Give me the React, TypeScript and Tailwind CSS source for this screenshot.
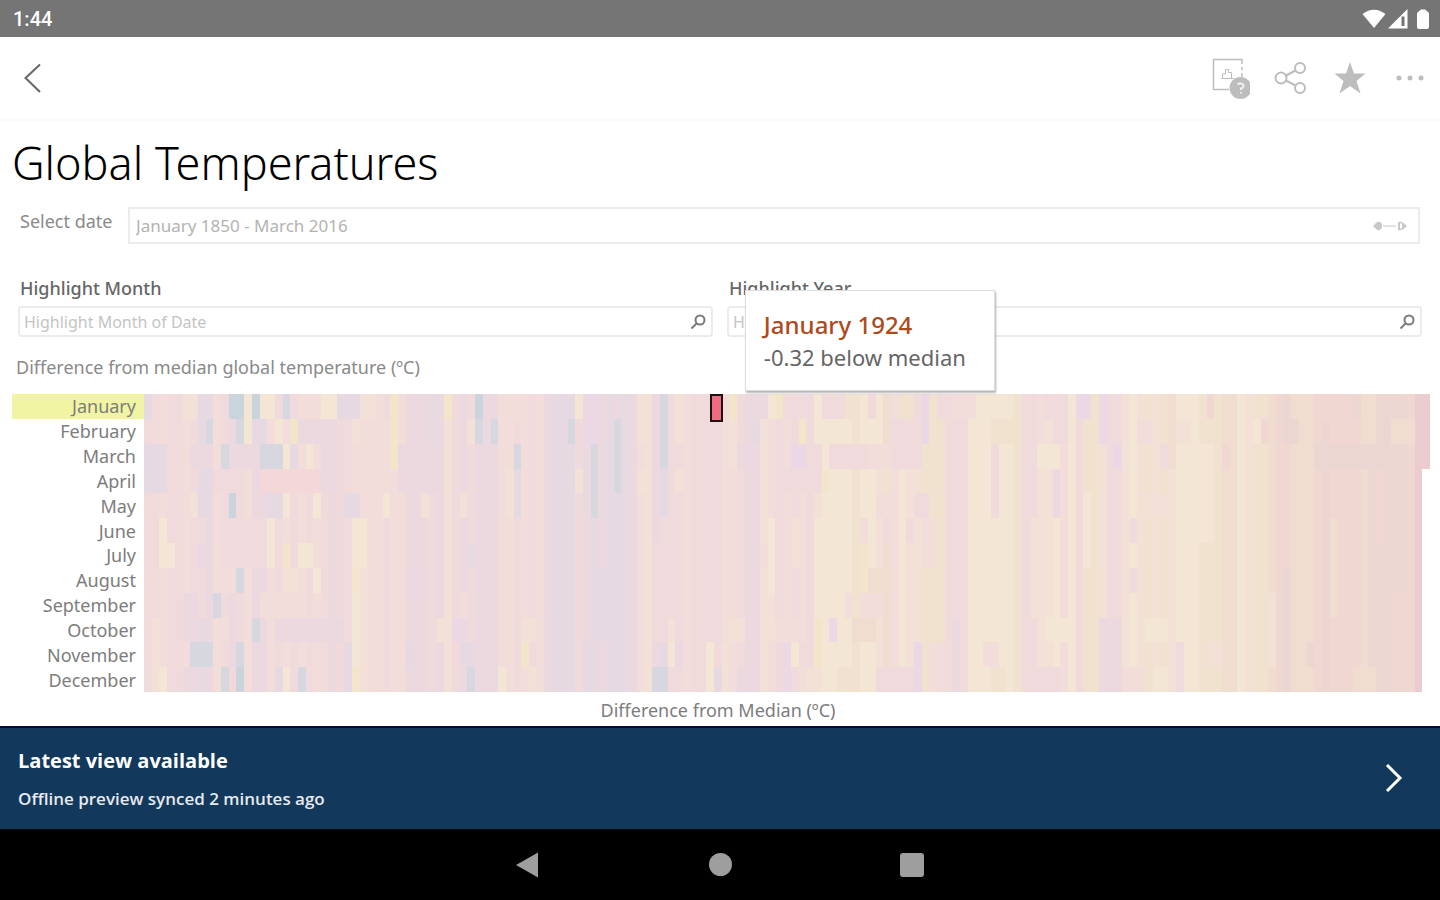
type Tone = keyof typeof TONES

// Faded palette of the heat map, cold to warm
const TONES = {
  t: '#c9d4dc',
  b: '#d7d7df',
  l: '#e6d9e2',
  p: '#ecd9e0',
  v: '#ecd7e4',
  r: '#f1dadc',
  q: '#f4d8d9',
  k: '#f2dddb',
  h: '#f3e0d7',
  y: '#f3e6d4',
  g: '#f2e5ca',
  o: '#f1e1cf',
  a: '#f1dcd0',
  s: '#f0d7d2',
  m: '#ecd6d1',
  e: '#ebcdd1'
}

const MONTHS = [
  'January',
  'February',
  'March',
  'April',
  'May',
  'June',
  'July',
  'August',
  'September',
  'October',
  'November',
  'December'
]

const FIRST_YEAR = 1850
const YEARS = 167
const SELECTED_YEAR = 1924

// Prevailing tone of each year, ten years a row
const YEAR_TONES = (
  'rrkrrkrlpk' +
  'rprkppkrkr' +
  'krkrprryhk' +
  'krkkppprph' +
  'rprpppkkrk' +
  'rkplllrplp' +
  'lllpkhplrr' +
  'krrrrkkrpp' +
  'hkrkrkryyy' +
  'yyoyyhakyh' +
  'hooorrryyy' +
  'yyyorrhhyk' +
  'yroohrrhyh' +
  'ohohyyyooo' +
  'aayhooasma' +
  'aasmssssam' +
  'mmmmse'
).split('') as Tone[]

// Runs of cells that stand out: year, month, years, months, tone
const PATCHES: [number, number, number, number, Tone][] = [
  [0, 0, 1, 1, 'l'], [5, 0, 2, 1, 'h'], [7, 0, 2, 1, 'l'], [11, 0, 2, 1, 't'], [12, 1, 1, 1, 'b'],
  [13, 0, 1, 2, 'y'], [14, 0, 1, 1, 't'], [15, 0, 2, 1, 'y'], [18, 0, 1, 1, 'b'], [20, 0, 2, 1, 'k'],
  [23, 0, 2, 1, 'y'], [25, 0, 3, 1, 'l'], [28, 0, 2, 1, 'h'], [32, 0, 1, 3, 'g'], [37, 0, 1, 2, 'l'],
  [39, 0, 1, 1, 'g'], [39, 1, 1, 4, 'h'], [43, 0, 1, 1, 't'], [43, 1, 1, 1, 'b'], [47, 0, 3, 1, 'k'],
  [53, 0, 2, 1, 'l'], [55, 1, 1, 1, 'b'], [56, 0, 1, 1, 'y'], [8, 1, 1, 1, 'b'], [9, 1, 1, 1, 'k'],
  [14, 1, 2, 1, 'l'], [17, 1, 1, 1, 'y'], [19, 1, 1, 1, 'g'], [20, 1, 5, 1, 'p'], [27, 1, 1, 1, 'h'],
  [26, 1, 1, 2, 'r'], [28, 1, 4, 2, 'k'], [42, 1, 1, 1, 'h'], [45, 1, 1, 1, 'b'], [0, 2, 3, 2, 'l'],
  [6, 2, 3, 1, 'p'], [10, 2, 1, 1, 'b'], [11, 2, 3, 1, 'p'], [15, 2, 3, 1, 'b'], [18, 2, 1, 1, 'y'],
  [19, 2, 1, 1, 'l'], [21, 2, 1, 1, 'y'], [23, 2, 2, 2, 'p'], [27, 2, 1, 2, 'k'], [33, 2, 5, 2, 'p'],
  [48, 2, 1, 1, 'b'], [48, 3, 1, 2, 'l'], [54, 2, 1, 4, 'l'], [7, 3, 2, 2, 'l'], [9, 3, 4, 1, 'r'],
  [15, 3, 8, 1, 'q'], [28, 3, 4, 1, 'k'], [27, 3, 1, 1, 'k'], [47, 3, 1, 2, 'h'], [56, 3, 1, 1, 'h'],
  [6, 4, 1, 1, 'h'], [11, 4, 1, 1, 't'], [16, 4, 2, 1, 'l'], [18, 4, 1, 1, 'y'], [22, 4, 1, 1, 'y'],
  [26, 4, 2, 1, 'l'], [28, 4, 1, 1, 'k'], [31, 4, 1, 1, 'y'], [36, 4, 1, 1, 'h'], [41, 4, 1, 1, 'h'],
  [8, 5, 1, 1, 'l'], [2, 5, 1, 1, 'y'], [2, 6, 2, 1, 'y'], [7, 5, 1, 4, 'r'], [7, 6, 1, 1, 'v'],
  [16, 5, 1, 2, 'y'], [11, 5, 5, 2, 'r'], [18, 6, 1, 1, 'g'], [20, 6, 2, 1, 'y'], [27, 5, 2, 2, 'y'],
  [27, 7, 1, 1, 'g'], [42, 6, 1, 1, 'l'], [12, 7, 1, 1, 'b'], [9, 7, 3, 1, 'k'], [18, 7, 2, 1, 'h'],
  [22, 7, 1, 1, 'y'], [35, 7, 1, 1, 'v'], [46, 5, 2, 4, 'k'], [9, 8, 1, 1, 'b'], [5, 8, 2, 2, 'p'],
  [15, 8, 6, 1, 'k'], [41, 8, 1, 1, 'k'], [14, 9, 1, 1, 'b'], [10, 9, 1, 1, 'k'], [1, 9, 1, 3, 'h'],
  [17, 9, 9, 1, 'p'], [40, 9, 1, 1, 'v'], [38, 9, 1, 1, 'h'], [49, 9, 2, 1, 'h'], [53, 9, 1, 3, 'l'],
  [6, 10, 3, 1, 'b'], [12, 10, 1, 1, 'b'], [20, 10, 1, 1, 'k'], [34, 10, 1, 1, 'l'], [41, 10, 2, 1, 'l'],
  [49, 10, 1, 1, 'g'], [2, 11, 1, 1, 'y'], [5, 11, 2, 1, 'p'], [10, 11, 1, 1, 'b'], [12, 11, 1, 1, 't'],
  [11, 11, 1, 1, 'q'], [17, 11, 1, 1, 'l'], [18, 11, 1, 1, 'y'], [20, 11, 1, 1, 'b'], [26, 10, 1, 2, 'l'],
  [42, 11, 1, 1, 'b'], [46, 11, 1, 1, 'y'], [50, 11, 1, 1, 'h'], [27, 11, 1, 1, 'g'],

  [57, 0, 2, 2, 'v'], [61, 0, 1, 1, 'p'], [64, 0, 2, 2, 'h'], [67, 0, 1, 3, 'b'], [69, 0, 1, 2, 'h'],
  [76, 0, 1, 1, 'g'], [79, 0, 2, 1, 'p'], [81, 0, 1, 1, 'y'], [82, 0, 1, 1, 'g'], [83, 0, 4, 1, 'r'],
  [88, 0, 3, 1, 'r'], [91, 0, 2, 1, 'o'], [94, 0, 1, 1, 'r'], [95, 0, 1, 2, 'y'], [98, 0, 2, 1, 'o'],
  [100, 0, 1, 3, 'r'], [101, 0, 1, 2, 'v'], [103, 0, 1, 1, 'r'], [105, 0, 3, 1, 'k'], [109, 0, 4, 1, 'y'],
  [76, 1, 1, 2, 'h'], [79, 1, 1, 1, 'l'], [85, 1, 1, 1, 'g'], [86, 1, 1, 1, 'r'], [97, 1, 4, 2, 'r'],
  [110, 1, 4, 1, 'o'], [58, 2, 1, 3, 'b'], [61, 1, 1, 3, 'b'], [77, 2, 3, 1, 'p'], [84, 2, 2, 1, 'v'],
  [87, 2, 7, 1, 'r'], [88, 2, 1, 1, 'y'], [94, 2, 3, 1, 'k'], [64, 3, 1, 1, 'h'], [69, 3, 1, 1, 'h'],
  [82, 3, 5, 1, 'r'], [87, 3, 1, 1, 'r'], [88, 3, 1, 1, 'g'], [67, 4, 1, 1, 'l'], [67, 5, 1, 5, 'r'],
  [66, 6, 1, 4, 'r'], [87, 4, 1, 1, 'h'], [96, 3, 1, 1, 'o'], [95, 4, 3, 1, 'k'], [100, 4, 2, 1, 'r'],
  [110, 2, 1, 3, 'r'], [81, 5, 1, 3, 'y'], [80, 6, 1, 1, 'k'], [84, 5, 1, 2, 'h'], [93, 5, 1, 1, 'k'],
  [96, 5, 1, 1, 'r'], [99, 5, 1, 1, 'r'], [99, 6, 1, 1, 'h'], [101, 5, 2, 2, 'k'], [93, 6, 1, 3, 'g'],
  [94, 7, 3, 1, 'a'], [65, 6, 1, 3, 'h'], [61, 6, 2, 5, 'l'], [58, 7, 2, 3, 'l'], [80, 8, 2, 2, 'h'],
  [91, 8, 1, 1, 'k'], [68, 9, 1, 2, 'h'], [76, 9, 2, 1, 'h'], [89, 9, 1, 1, 'v'], [87, 9, 1, 2, 'g'],
  [93, 8, 3, 1, 'k'], [92, 9, 3, 1, 'a'], [82, 9, 4, 1, 'k'], [57, 10, 2, 2, 'l'], [60, 10, 1, 2, 'l'],
  [66, 11, 2, 1, 'b'], [68, 10, 1, 1, 'y'], [69, 10, 1, 1, 'v'], [73, 10, 1, 2, 'y'], [74, 11, 1, 1, 'l'],
  [75, 10, 1, 2, 'h'], [77, 11, 3, 1, 'p'], [83, 10, 1, 1, 'v'], [84, 10, 1, 1, 'y'], [85, 10, 2, 1, 'r'],
  [83, 11, 1, 1, 'v'], [90, 11, 3, 1, 'o'], [86, 11, 2, 1, 'h'], [95, 11, 5, 1, 'r'], [100, 10, 1, 2, 'v'],
  [102, 10, 2, 2, 'k'], [105, 9, 1, 3, 'p'], [109, 10, 2, 1, 'k'], [110, 11, 2, 1, 'o'],

  [116, 0, 1, 2, 'k'], [117, 0, 3, 1, 'r'], [118, 1, 2, 1, 'r'], [121, 0, 2, 1, 'v'], [124, 0, 1, 2, 'v'],
  [126, 2, 1, 1, 'v'], [116, 2, 3, 1, 'y'], [114, 4, 1, 5, 'r'], [118, 3, 1, 2, 'p'], [115, 5, 3, 4, 'h'],
  [122, 4, 1, 3, 'y'], [128, 5, 1, 1, 'r'], [128, 7, 1, 1, 'r'], [130, 4, 3, 1, 'h'], [132, 2, 1, 1, 'r'],
  [129, 1, 2, 1, 'k'], [133, 0, 1, 3, 'a'], [138, 0, 1, 1, 's'], [137, 2, 2, 4, 'y'], [134, 1, 2, 1, 'h'],
  [145, 1, 1, 1, 's'], [144, 1, 1, 1, 'y'], [140, 2, 1, 1, 's'], [140, 3, 2, 3, 'a'], [142, 6, 1, 3, 'y'],
  [148, 1, 2, 1, 'm'], [148, 2, 1, 5, 's'], [152, 0, 4, 1, 's'], [157, 0, 1, 1, 'm'], [158, 0, 2, 2, 'a'],
  [161, 0, 1, 2, 'm'], [162, 1, 3, 1, 'a'], [152, 2, 7, 1, 'm'], [160, 3, 1, 3, 's'], [154, 5, 1, 4, 'a'],
  [146, 8, 1, 3, 'h'], [155, 8, 3, 3, 's'], [162, 8, 3, 4, 's'], [124, 9, 3, 3, 'p'], [117, 9, 3, 1, 'y'],
  [130, 9, 3, 1, 'y'], [134, 10, 1, 2, 'r'], [138, 10, 2, 1, 'h'], [116, 11, 3, 1, 'r'], [127, 11, 3, 1, 'k'],
  [131, 11, 2, 1, 'y'], [157, 11, 3, 1, 'a'], [151, 10, 1, 1, 'm'], [147, 8, 1, 2, 's'], [165, 10, 1, 2, 'e'],
  [166, 0, 1, 3, 'e']
]

function StatusBar() {
  return (
    <div className="flex h-[37px] items-center justify-between bg-[#757575] pr-2 pl-[13px] text-white">
      <span className="font-[Roboto] text-xl leading-6 font-medium">1:44</span>
      <div className="flex items-center gap-0.5">
        <svg width="24" height="20" viewBox="0 0 24 20" fill="currentColor">
          <path d="M0.500 5Q12 -3.500 23.500 5L12 19Z" />
        </svg>
        <svg width="20" height="20" viewBox="0 0 20 20" fill="currentColor">
          <path fillRule="evenodd" d="M0 19.500L19.500 0V19.500ZM13.500 7.500V17H16.500V7.500Z" />
        </svg>
        <svg width="22" height="20" viewBox="0 0 22 20" fill="currentColor">
          <path d="M8 3L11 0.500H15L18 3Q19 3.500 19 5V18Q19 20 17 20H9Q7 20 7 18V5Q7 3.500 8 3Z" />
        </svg>
      </div>
    </div>
  )
}

function Toolbar() {
  return (
    <header className="flex h-[84px] items-center justify-between border-b-2 border-[#fafafa] pr-2.5 pl-3">
      <button aria-label="Back" className="flex size-10 items-center justify-center text-[#666666]">
        <svg width="20" height="32" viewBox="0 0 20 32" fill="none" stroke="currentColor" strokeWidth="2">
          <path d="M18 2.500L3.500 16L18 30" />
        </svg>
      </button>
      <div className="flex items-center gap-5 text-[#bdbdbd]">
        <button aria-label="Data quality" className="flex size-10 items-center justify-center">
          <svg width="40" height="42" viewBox="0 0 40 42" fill="none" stroke="currentColor">
            <path d="M19 32.500H3.500V2.500H32V7M32 10V13M32 16V20" strokeWidth="1.500" />
            <path d="M12.500 21V17H15.500V12.500H18.500V15.500H21.500V21M11.500 21.500H24" strokeWidth="1" />
            <circle cx="30.500" cy="31" r="11" fill="currentColor" stroke="none" />
            <path d="M27.500 27.500Q31 25 33.500 28Q34 30.500 31 31.500V33M31 35V36.500" stroke="#eeeeee" strokeWidth="2" />
          </svg>
        </button>
        <button aria-label="Share" className="flex size-10 items-center justify-center">
          <svg width="34" height="34" viewBox="0 0 34 34" fill="none" stroke="currentColor" strokeWidth="2">
            <circle cx="8" cy="17" r="5.500" />
            <circle cx="27" cy="7" r="5" />
            <circle cx="27" cy="27" r="5" />
            <path d="M13 14.500L22.500 9.500M13 19.500L22.500 24.500" />
          </svg>
        </button>
        <button aria-label="Favorite" className="flex size-10 items-center justify-center">
          <svg width="32" height="32" viewBox="0 0 32 32" fill="currentColor">
            <path d="M16 0L20 11.500H31.500L22.500 19L26.500 31.500L16 24L5.500 31.500L9.500 19L0.500 11.500H12Z" />
          </svg>
        </button>
        <button aria-label="More" className="flex size-10 items-center justify-center">
          <svg width="28" height="6" viewBox="0 0 28 6" fill="currentColor">
            <circle cx="3" cy="3" r="2.500" />
            <circle cx="14" cy="3" r="2.500" />
            <circle cx="25" cy="3" r="2.500" />
          </svg>
        </button>
      </div>
    </header>
  )
}

function HighlightField({ id, label, placeholder }: { id: string; label: string; placeholder: string }) {
  return (
    <div className="min-w-0 flex-1">
      <label htmlFor={id} className="block px-0.5 text-lg leading-6 font-medium text-[#666666]">
        {label}
      </label>
      <div className="mt-1.5 flex h-[31px] items-center rounded-sm border-2 border-[#ebebeb] pr-1 pl-1">
        <input
          id={id}
          placeholder={placeholder}
          className="min-w-0 flex-1 text-base leading-6 text-[#666666] outline-none placeholder:text-[#c4c4c4]"
        />
        <svg width="18" height="18" viewBox="0 0 18 18" fill="none" stroke="#7a7a7a" strokeWidth="2">
          <circle cx="11" cy="7" r="4.500" />
          <path d="M7.500 10.500L2.500 15.500" />
        </svg>
      </div>
    </div>
  )
}

function HeatMap() {
  const selectedLeft = `${((SELECTED_YEAR - FIRST_YEAR) / YEARS) * 100}%`

  return (
    <div className="mt-[13px] flex h-[298px] pr-2.5 pl-3">
      <div className="grid w-[132px] grid-rows-12 text-lg text-[#7d7d7d]">
        {MONTHS.map((month, i) => (
          <div
            key={month}
            className={`flex items-center justify-end pr-2 leading-6 ${i === 0 ? 'bg-[#f1f4a3]' : ''}`}
          >
            {month}
          </div>
        ))}
      </div>
      <div className="relative flex-1">
        <svg
          className="block h-full w-full"
          viewBox={`0 0 ${YEARS} ${MONTHS.length}`}
          preserveAspectRatio="none"
          shapeRendering="crispEdges"
        >
          {YEAR_TONES.map((tone, i) => (
            <rect key={i} x={i} y={0} width={1} height={i === YEARS - 1 ? 3 : 12} fill={TONES[tone]} />
          ))}
          {PATCHES.map(([year, month, years, months, tone], i) => (
            <rect key={i} x={year} y={month} width={years} height={months} fill={TONES[tone]} />
          ))}
        </svg>
        <div
          className="absolute top-0 -ml-1 h-7 w-[13px] border-2 border-[#1c1014] bg-[#ee6b80]"
          style={{ left: selectedLeft }}
        />
        <div
          className="absolute bottom-full mb-[3px] ml-[31px] h-[101px] w-[250px] border border-[#dddddd] bg-white px-[18px] pt-[18px] shadow-[1px_2px_2px_#b5b5b5]"
          style={{ left: selectedLeft }}
        >
          <div className="text-2xl leading-8 font-medium whitespace-nowrap text-[#b04a1c]">January 1924</div>
          <div className="text-[22px] leading-8 whitespace-nowrap text-[#666666]">-0.32 below median</div>
        </div>
      </div>
    </div>
  )
}

function NavigationBar() {
  return (
    <nav className="flex h-[71px] items-center justify-center gap-[152px] bg-black text-[#9e9e9e]">
      <button aria-label="Back" className="flex size-10 items-center justify-center">
        <svg width="24" height="26" viewBox="0 0 24 26" fill="currentColor">
          <path d="M0 13L22 0.500V25.500Z" />
        </svg>
      </button>
      <button aria-label="Home" className="flex size-10 items-center justify-center">
        <span className="size-[23px] rounded-full bg-current" />
      </button>
      <button aria-label="Recent apps" className="flex size-10 items-center justify-center">
        <span className="size-6 rounded-[3px] bg-current" />
      </button>
    </nav>
  )
}

export default function App() {
  return (
    <div className="flex min-h-screen flex-col bg-white font-['Noto_Sans',sans-serif]">
      <StatusBar />
      <Toolbar />

      <main className="flex-1">
        <h1 className="px-3 pt-3 text-[45px] leading-[60px] font-light text-black">Global Temperatures</h1>

        <div className="mt-3.5 flex pr-5 pl-5">
          <label htmlFor="date-range" className="w-[108px] pt-0.5 text-lg leading-6 text-[#8a8a8a]">
            Select date
          </label>
          <div className="flex h-[37px] flex-1 items-center border-2 border-[#ebebeb] pr-2.5 pl-1.5">
            <input
              id="date-range"
              readOnly
              value="January 1850 - March 2016"
              className="min-w-0 flex-1 text-[17px] leading-6 text-[#b3b3b3] outline-none"
            />
            <svg width="36" height="12" viewBox="0 0 36 12" fill="#c8c8c8">
              <path d="M1 6L5 2Q10 1 10 6Q10 11 5 10ZM26 2Q30 0.500 35 6Q30 11.500 26 10Z" />
              <path d="M11 5H24V7H11Z" fill="#e2e2e2" />
              <path d="M29 3.500V8.500" stroke="#ffffff" strokeWidth="2" />
            </svg>
          </div>
        </div>

        <div className="mt-8 flex gap-3.5 pr-[18px] pl-[18px]">
          <HighlightField id="month" label="Highlight Month" placeholder="Highlight Month of Date" />
          <HighlightField id="year" label="Highlight Year" placeholder="Highlight Year of Date" />
        </div>

        <h2 className="mt-4 px-4 text-lg leading-7 text-[#8a8a8a]">
          Difference from median global temperature (ºC)
        </h2>
        <HeatMap />
        <p className="pt-1 pr-1 pb-0.5 text-center text-lg leading-7 text-[#7d7d7d]">
          Difference from Median (ºC)
        </p>
      </main>

      <section className="flex h-[103px] items-center justify-between border-t-2 border-[#06093c] bg-[#12385c] pr-9 pl-[18px] font-['Open_Sans',sans-serif] text-white">
        <div>
          <h3 className="text-xl leading-8 font-bold">Latest view available</h3>
          <p className="mt-2 text-[17px] leading-7 font-semibold text-[#e6e9ef]">
            Offline preview synced 2 minutes ago
          </p>
        </div>
        <button aria-label="Open latest view">
          <svg width="20" height="30" viewBox="0 0 20 30" fill="none" stroke="currentColor" strokeWidth="3">
            <path d="M3 1L16 14L3 27" />
          </svg>
        </button>
      </section>
      <NavigationBar />
    </div>
  )
}
